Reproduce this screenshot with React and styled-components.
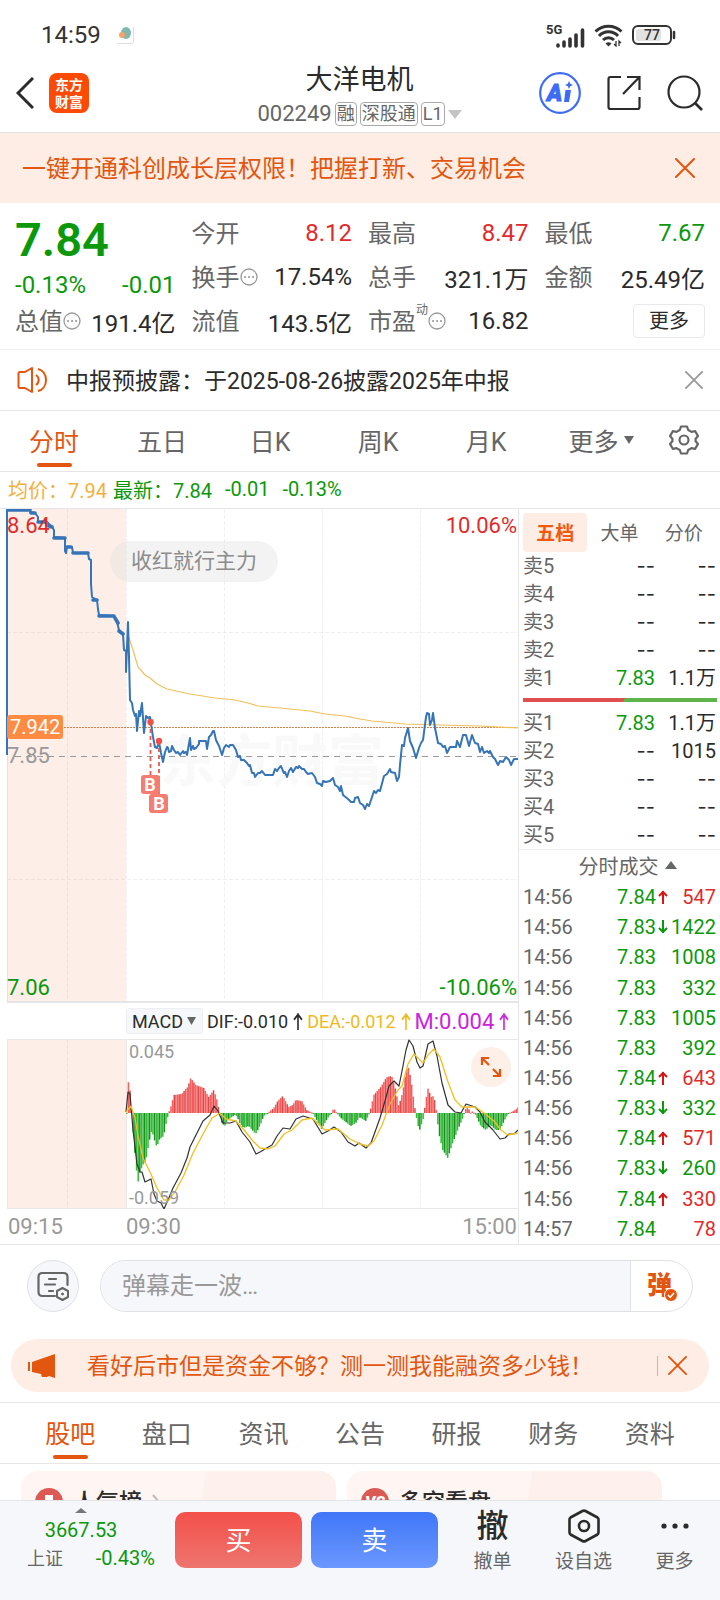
import React, { useState } from 'react';
import styled, { createGlobalStyle, css } from 'styled-components';

const colors = {
  up: '#df2b2b',
  down: '#0b980b',
  brand: '#e2560f',
  brandSoft: '#fdede4',
  ink: '#2b2b2b',
  text: '#666',
  muted: '#999',
  line: '#e6e6e8',
  panel: '#f6f7fa',
};

const GlobalStyle = createGlobalStyle`
  *, *::before, *::after {
    box-sizing: border-box;
  }

  body {
    margin: 0;
    background: #fff;
    color: ${colors.ink};
    font-family: Roboto, 'Noto Sans CJK SC', sans-serif;
    font-size: 24px;
  }

  button, input, select {
    margin: 0;
    padding: 0;
    border: 0;
    background: none;
    color: inherit;
    font: inherit;
  }

  svg {
    display: block;
    flex: none;
  }
`;

const Page = styled.main`
  width: 100%;
  overflow: hidden;
`;

/* status bar and header */

const StatusBar = styled.div`
  display: flex;
  align-items: center;
  height: 62px;
  padding: 8px 44px 0 41px;
  color: #333;
  font-size: 24px;
`;

const StatusIcons = styled.div`
  display: flex;
  align-items: center;
  gap: 8px;
  margin-left: auto;
`;

const AppDot = styled.svg`
  margin-left: 14px;
`;

const Header = styled.header`
  display: grid;
  grid-template-columns: 1fr auto 1fr;
  align-items: center;
  height: 71px;
  padding: 0 17px 8px 16px;
  border-bottom: 1px solid ${colors.line};
`;

const HeaderSide = styled.div`
  display: flex;
  align-items: center;
  gap: ${({ gap }) => gap}px;
  justify-content: ${({ end }) => (end ? 'flex-end' : 'flex-start')};
`;

const IconButton = styled.button`
  display: flex;
  align-items: center;
  justify-content: center;
  flex: none;
`;

const Logo = styled.a`
  display: grid;
  place-content: center;
  width: 40px;
  height: 40px;
  border-radius: 8px;
  background: #fe4a05;
  color: #fff;
  font-family: 'Noto Sans CJK SC', sans-serif;
  font-size: 14px;
  font-weight: 700;
  line-height: 17px;
  text-align: center;
  text-decoration: none;
`;

const StockTitle = styled.h1`
  margin: 0;
  font-size: 27px;
  font-weight: 400;
  line-height: 36px;
  text-align: center;
`;

const StockMeta = styled.div`
  display: flex;
  align-items: center;
  gap: 3px;
  height: 26px;
  margin: 3px 0 -3px;
  color: ${colors.text};
  font-size: 22px;
  line-height: 26px;
`;

const Tag = styled.span`
  height: 24px;
  padding: 0 1px;
  border: 1px solid #aaa;
  border-radius: 4px;
  font-size: 18px;
  line-height: 21px;
`;

/* banners */

const Promo = styled.div`
  display: flex;
  align-items: center;
  justify-content: space-between;
  height: 70px;
  padding: 0 25px 0 22px;
  background: ${colors.brandSoft};
  color: ${colors.brand};

  span {
    padding-bottom: 4px;
  }
`;

const Notice = styled.div`
  display: flex;
  align-items: center;
  height: 61px;
  padding: 0 17px;
  border-bottom: 1px solid ${colors.line};
  font-size: 23px;

  span {
    flex: 1;
    margin-left: 18px;
    padding-bottom: 3px;
  }
`;

/* quote */

const Quote = styled.section`
  display: grid;
  grid-template-columns: repeat(4, 1fr);
  grid-template-rows: repeat(3, 44px);
  column-gap: 16px;
  padding: 8px 15px 6px;
  border-bottom: 1px solid #f0f0f2;
`;

const Cell = styled.div`
  display: flex;
  align-items: center;
  color: ${({ tone }) => colors[tone] || colors.ink};
  white-space: nowrap;

  b {
    margin-left: auto;
    font-weight: 400;
  }
`;

const Label = styled.span`
  padding-bottom: 4px;
  color: ${colors.text};
`;

const Sup = styled.sup`
  align-self: flex-start;
  color: ${colors.text};
  font-size: 12px;
  line-height: 22px;
`;

const PriceBlock = styled.div`
  display: flex;
  flex-direction: column;
  justify-content: space-between;
  grid-row: span 2;
  color: ${colors.down};

  strong {
    font-size: 47px;
    font-weight: 600;
    line-height: 58px;
  }

  div {
    display: flex;
    justify-content: space-between;
    line-height: 28px;
  }
`;

const MoreButton = styled.button`
  width: 72px;
  height: 34px;
  margin-left: auto;
  padding-bottom: 3px;
  border: 1px solid #e9e9eb;
  border-radius: 4px;
  font-size: 20px;
`;

/* tabs */

const Tab = styled.button`
  position: relative;
  display: flex;
  align-items: center;
  justify-content: center;
  gap: 5px;
  padding-bottom: 3px;
  color: ${({ active }) => (active ? colors.brand : colors.text)};
  font-size: 25px;

  &::after {
    content: '';
    position: absolute;
    bottom: 4px;
    width: 35px;
    height: 4px;
    border-radius: 2px;
    background: ${({ active }) => (active ? colors.brand : 'transparent')};
  }
`;

const Tabs = styled.div`
  display: grid;
  height: 61px;
  border-bottom: 1px solid ${colors.line};
  ${({ kind }) =>
    kind === 'period'
      ? css`
          grid-template-columns: repeat(6, 3fr) 2fr;

          ${Tab}:nth-last-child(2) {
            padding-left: 14px;
          }
        `
      : css`
          grid-template-columns: repeat(7, 1fr);
          padding: 0 22px;
        `}
`;

const Averages = styled.div`
  display: flex;
  align-items: center;
  gap: 13px;
  height: 37px;
  padding: 0 8px 2px;
  border-bottom: 1px solid ${colors.line};
  color: ${colors.down};
  font-size: 20px;
  white-space: nowrap;

  span:first-child {
    margin-right: -7px;
    color: #f2b13c;
  }
`;

/* chart column */

const Market = styled.section`
  display: grid;
  grid-template-columns: minmax(0, 1fr) 202px;
  border-bottom: 1px solid ${colors.line};
`;

const Plot = styled.div`
  position: relative;

  svg.plot {
    width: 100%;
    height: ${({ height }) => height}px;
  }
`;

const PlotLabel = styled.span`
  position: absolute;
  top: ${({ top }) => top}px;
  ${({ right, left }) => (right ? `right: ${right}px` : `left: ${left}px`)};
  color: ${({ tone }) => colors[tone]};
  font-size: ${({ small }) => (small ? 18 : 22)}px;
  line-height: 24px;
`;

const AvgTag = styled(PlotLabel)`
  padding: 0 3px;
  border-radius: 3px;
  background: #ff8c42;
  color: #fff;
  font-size: 20px;
`;

const Danmu = styled.span`
  position: absolute;
  top: 32px;
  left: 110px;
  padding: 0 21px;
  border-radius: 21px;
  background: rgba(225, 225, 225, 0.4);
  color: #8c8c8c;
  font-size: 21px;
  line-height: 41px;
`;

const Expand = styled(IconButton)`
  position: absolute;
  top: 8px;
  right: 7px;
  width: 40px;
  height: 40px;
  border-radius: 50%;
  background: #fdf0e9;
`;

const Indicator = styled.div`
  display: flex;
  align-items: center;
  gap: 4px;
  height: 36px;
  padding-left: 126px;
  white-space: nowrap;
`;

const SelectBox = styled.label`
  display: flex;
  align-items: center;
  justify-content: space-between;
  width: 77px;
  height: 26px;
  padding: 0 6px 0 5px;
  border: 1px solid #eeeff2;
  border-radius: 3px;
  background: ${colors.panel};

  select {
    width: 54px;
    appearance: none;
    font-size: 18px;
  }
`;

const Reading = styled.span`
  display: flex;
  align-items: center;
  gap: 5px;
  color: ${({ color }) => color};
  font-size: ${({ wide }) => (wide ? 22 : 18)}px;
`;

const Times = styled.div`
  display: grid;
  grid-template-columns: 118px 1fr auto;
  align-items: center;
  height: 35px;
  padding: 0 1px 0 8px;
  color: ${colors.muted};
  font-size: 22px;
`;

/* order book */

const Book = styled.aside`
  display: flex;
  flex-direction: column;
  border-left: 1px solid ${colors.line};
  font-size: 20px;
`;

const BookTabs = styled.div`
  display: grid;
  grid-template-columns: repeat(3, 1fr);
  height: 39px;
  margin: 4px 4px 0;
`;

const BookTab = styled.button`
  padding-bottom: 3px;
  border-radius: 4px;
  background: ${({ active }) => (active ? '#feede5' : 'none')};
  color: ${({ active }) => (active ? '#f2590c' : colors.text)};
  font-size: 19px;
  font-weight: ${({ active }) => (active ? 700 : 400)};
`;

const BookTable = styled.table`
  width: 100%;
  border-collapse: collapse;
  table-layout: fixed;
  color: ${colors.ink};

  th,
  td {
    height: 28px;
    padding: 0 4px;
    font-weight: 400;
    line-height: 28px;
    text-align: right;
    white-space: nowrap;
  }

  th {
    width: 34%;
    color: ${colors.text};
    text-align: left;
  }

  td:last-child {
    width: 61px;
  }
`;

const Price = styled.td`
  color: ${({ $empty }) => ($empty ? colors.ink : colors.down)};
`;

const Dashes = styled.span`
  font-family: Inter, sans-serif;
`;

const Balance = styled.div`
  height: 4px;
  margin: 6px 3px 7px 4px;
  background: linear-gradient(120deg, #e04f4f 52%, #5fb54a 52%);
`;

const TradesTitle = styled.button`
  display: flex;
  align-items: center;
  justify-content: center;
  gap: 6px;
  height: 33px;
  padding: 0 0 2px 16px;
  border-top: 1px solid #f0f0f2;
  color: ${colors.text};
  font-size: 20px;
`;

const Trades = styled.div`
  flex: 1;
  display: grid;
`;

const TradeTable = styled.table`
  width: 100%;
  border-collapse: collapse;

  td {
    padding: 0;
    line-height: 28px;
  }

  td:first-child {
    width: 98px;
    padding-left: 4px;
    color: ${colors.text};
  }

  td:last-child {
    padding-right: 4px;
    text-align: right;
  }
`;

const TradePrice = styled.span`
  display: flex;
  align-items: center;
  gap: 2px;
  color: ${colors.down};
`;

const Volume = styled.td`
  color: ${({ $up }) => ($up ? colors.up : colors.down)};
`;

/* comment row */

const Comment = styled.form`
  display: flex;
  gap: 21px;
  padding: 15px 27px 27px;
`;

const RoundButton = styled(IconButton)`
  width: 52px;
  height: 52px;
  border: 1px solid #dfe1e5;
  border-radius: 50%;
  background: ${colors.panel};
`;

const Field = styled.div`
  display: flex;
  flex: 1;
  height: 52px;
  border: 1px solid #dfe1e5;
  border-radius: 26px;
  overflow: hidden;

  input {
    flex: 1;
    min-width: 0;
    padding: 0 21px;
    background: ${colors.panel};
  }

  input::placeholder {
    color: ${colors.muted};
  }
`;

const DanmuToggle = styled.button`
  position: relative;
  width: 62px;
  padding-right: 4px;
  border-left: 1px solid #dfe1e5;
  color: ${colors.brand};
  font-size: 25px;
  font-weight: 900;
  line-height: 46px;

  svg {
    position: absolute;
    right: 14px;
    bottom: 9px;
  }
`;

const Margin = styled.div`
  display: flex;
  align-items: center;
  height: 53px;
  margin: 0 11px 10px;
  padding: 0 22px 0 16px;
  border-radius: 27px;
  background: ${colors.brandSoft};
  color: ${colors.brand};
  font-size: 23px;
  white-space: nowrap;

  span {
    flex: 1;
    margin-left: 32px;
    padding-bottom: 3px;
  }

  button {
    height: 20px;
    padding-left: 10px;
    border-left: 1px solid #ecaa88;
  }
`;

const Divider = styled.div`
  border-top: 1px solid ${colors.line};
`;

/* cards and bottom bar */

const Cards = styled.div`
  display: grid;
  grid-template-columns: 1fr 1fr;
  gap: 11px;
  height: 36px;
  padding: 7px 58px 0 21px;
  overflow: hidden;
`;

const Card = styled.a`
  display: flex;
  align-items: center;
  gap: 10px;
  height: 76px;
  padding: 0 14px 14px;
  border-radius: 16px;
  background: linear-gradient(100deg, #fff6f3 56%, #fdf0ed 57%);
  color: ${colors.ink};
  font-size: 23px;
  font-weight: 500;
  text-decoration: none;

  span {
    padding-bottom: 5px;
  }
`;

const BottomBar = styled.nav`
  display: grid;
  grid-template-columns: 166px 127px 127px minmax(0, 1fr);
  column-gap: 9px;
  height: 100px;
  border-top: 1px solid #e3e4e7;
  background: ${colors.panel};
`;

const Index = styled.button`
  display: grid;
  grid-template-columns: auto auto;
  grid-template-rows: 12px 28px 28px;
  align-content: start;
  align-items: center;
  justify-content: space-between;
  padding: 3px 11px 0 27px;
  color: ${colors.down};
  font-size: 20px;

  svg,
  strong {
    grid-column: span 2;
    justify-self: center;
    margin-right: 20px;
    font-weight: 400;
  }

  span {
    padding-bottom: 3px;
    color: ${colors.text};
    font-size: 18px;
  }
`;

const TradeButton = styled.button`
  height: 56px;
  margin-top: 11px;
  padding-bottom: 4px;
  border-radius: 10px;
  background: ${({ $buy }) =>
    $buy
      ? 'linear-gradient(#f4504a, #ee756f)'
      : 'linear-gradient(#3f77f7, #6c98ff)'};
  color: #fff;
  font-size: 26px;
`;

const Actions = styled.div`
  display: grid;
  grid-template-columns: repeat(3, 1fr);
`;

const Action = styled.button`
  display: grid;
  grid-template-rows: 36px 26px;
  align-content: start;
  place-items: center;
  row-gap: 2px;
  padding-top: 7px;
  color: ${colors.text};
  font-size: 19px;

  b {
    color: ${colors.ink};
    font-size: 32px;
    font-weight: 500;
    line-height: 34px;
  }
`;

/* icons */

const Close = ({ color, size = 20 }) => (
  <svg width={size} height={size} viewBox="0 0 20 20" stroke={color} strokeWidth="2" strokeLinecap="round">
    <path d="M1 1 19 19M19 1 1 19" />
  </svg>
);

const Triangle = ({ width, height, up, color = '#666' }) => (
  <svg width={width} height={height} viewBox="0 0 10 10" preserveAspectRatio="none" fill={color}>
    <path d={up ? 'M0 10 5 0l5 10z' : 'M0 0h10L5 10z'} />
  </svg>
);

const Arrow = ({ down, color = 'currentColor', height = 14, stroke = 2 }) => (
  <svg width="10" height={height} viewBox="0 0 10 14" preserveAspectRatio="none" fill="none" stroke={color} strokeWidth={stroke}>
    <path d={down ? 'M5 0v13M1 8l4 4 4-4' : 'M5 14V1M1 6l4-4 4 4'} />
  </svg>
);

const InfoDot = () => (
  <svg width="18" height="18" viewBox="0 0 18 18" fill="none" stroke="#999">
    <circle cx="9" cy="9" r="8" strokeWidth="1.3" />
    <path d="M5 9h.1M9 9h.1M13 9h.1" strokeWidth="2" strokeLinecap="round" />
  </svg>
);

const Signal = () => (
  <svg width="40" height="26" viewBox="0 0 40 26">
    <text x="0" y="12" fontSize="13" fontWeight="700" fill="#333">5G</text>
    <path d="M12 24v-1M18 24v-4M24 24v-7M30 24V13M36.500 24V8" stroke="#333" strokeWidth="3.600" strokeLinecap="round" />
  </svg>
);

const Wifi = () => (
  <svg width="30" height="24" viewBox="0 0 30 24" fill="none" stroke="#333" strokeWidth="3">
    <path d="M1.500 8.500a18.500 18.500 0 0 1 26 0M5 13a13 13 0 0 1 19 0M9 17a8 8 0 0 1 11 0" />
    <path d="M11.500 20.500a4.500 4.500 0 0 1 6 0l-3 3z" fill="#333" stroke="none" />
    <path d="M22 18v5l-2-2M25 23v-5l2 2" strokeWidth="1.300" />
  </svg>
);

const Battery = () => (
  <svg width="44" height="20" viewBox="0 0 44 20">
    <rect x="1" y="1" width="38" height="18" rx="5" fill="#fff" stroke="#333" strokeWidth="2" />
    <rect x="4" y="4" width="25" height="12" rx="2" fill="#e2e2e2" />
    <path d="M42 7v6" stroke="#333" strokeWidth="2.500" strokeLinecap="round" />
    <text x="20" y="15" fontSize="14" fontWeight="500" fill="#333" textAnchor="middle">77</text>
  </svg>
);

const AiIcon = () => (
  <svg width="42" height="42" viewBox="0 0 42 42">
    <circle cx="21" cy="21" r="19.800" fill="#fff" stroke="#3d6bf5" strokeWidth="2.200" />
    <text x="8" y="29" fontSize="23" fontWeight="900" fontStyle="italic" fill="#3d6bf5" stroke="#3d6bf5">A</text>
    <path d="m26.500 18h5.500l-2 12h-5z" fill="#3d6bf5" />
    <path d="m30 9 1.200 2.800L34 13l-2.800 1.200L30 17l-1.200-2.800L26 13l2.800-1.200z" fill="#3d6bf5" />
  </svg>
);

const ShareIcon = () => (
  <svg width="34" height="36" viewBox="0 0 34 36" fill="none" stroke="#2b2b2b" strokeWidth="2.200">
    <path d="M14 2H3.500Q1.500 2 1.500 4v28q0 2 2 2h27q2 0 2-2V22M16 19 32 2.500M20 2h12.500v13" />
  </svg>
);

const SearchIcon = () => (
  <svg width="36" height="36" viewBox="0 0 36 36" fill="none" stroke="#2b2b2b" strokeWidth="2.200">
    <circle cx="17" cy="17" r="15.500" />
    <path d="m28 28 7 7" strokeWidth="2.600" />
  </svg>
);

const Speaker = () => (
  <svg width="31" height="26" viewBox="0 0 31 26" fill="none" stroke={colors.brand} strokeWidth="2">
    <path d="M1.500 6.500q0-1.500 1.500-1.500h5l7-4v24l-7-4H3q-1.500 0-1.500-1.500zM19 8a6 6 0 0 1 0 10M21 2c4.500 1 8 5 8 11s-3.500 10-8 11" strokeLinejoin="round" />
  </svg>
);

const Gear = () => (
  <svg width="30" height="30" viewBox="0 0 30 30" fill="none" stroke="#666" strokeWidth="2.200" strokeLinejoin="round">
    <path d="M12 1.500h6l1.200 3.500 3.300 1.900 3.700-.7 2.800 4.900-2.400 2.700v2.400l2.400 2.700-2.800 4.900-3.700-.7-3.300 1.900-1.200 3.500h-6l-1.200-3.500-3.300-1.900-3.700.7L1 18.900l2.400-2.700v-2.400L1 11.100l2.800-4.900 3.700.7L10.800 5z" />
    <circle cx="15" cy="15" r="4.500" />
  </svg>
);

const ExpandIcon = () => (
  <svg width="22" height="22" viewBox="0 0 22 22" fill="none" stroke={colors.brand} strokeWidth="2.200">
    <path d="M9 2H2v7M2 2l7 7M13 20h7v-7M20 20l-7-7" />
  </svg>
);

const NoteIcon = () => (
  <svg width="32" height="30" viewBox="0 0 32 30" fill="none" stroke="#666" strokeWidth="2.200" strokeLinecap="round">
    <path d="M18 25H5.500q-4 0-4-4V6q0-4 4-4h21q4 0 4 4v8M12 8h7M8 13.500h10M12 20h4" />
    <path d="m25.500 17 5.500 3v6l-5.500 3-5.500-3v-6z" strokeWidth="2" strokeLinejoin="round" />
    <circle cx="25.500" cy="23" r="1" fill="#666" strokeWidth="1" />
  </svg>
);

const Megaphone = () => (
  <svg width="28" height="24" viewBox="0 0 28 24" fill={colors.brand}>
    <path d="M1 8h2v9H1zM5 8l23-8v24l-6-2-2 1h-5l-1-3-9-2z" />
  </svg>
);

const CheckDot = () => (
  <svg width="14" height="14" viewBox="0 0 14 14" fill="none">
    <circle cx="7" cy="7" r="6.500" fill={colors.brand} stroke="#fff" />
    <path d="m4 7 2.200 2.300L10 5" stroke="#fff" strokeWidth="1.500" />
  </svg>
);

const Hexagon = () => (
  <svg width="32" height="34" viewBox="0 0 32 34" fill="none" stroke="#2b2b2b" strokeWidth="2.600" strokeLinejoin="round">
    <path d="M14.500 2q1.500-.8 3 0l12 6.500q1 .6 1 2v13q0 1.400-1 2l-12 6.500q-1.500.8-3 0l-12-6.500q-1-.6-1-2v-13q0-1.400 1-2z" />
    <circle cx="16" cy="17" r="5" />
  </svg>
);

/* chart data */

const priceLine =
  '7,755 7,510 30,510 30,512 35,513 38,517 38,522 47,522 52,527 54,530 54,537 65,538 65,551 66,553 67,547 72,547 73,553 88,553 89,559 91,560 91,584 92,597 97,600 98,609 99,615 114,616 117,622 119,630 123,634 124,650 126,651 126,672 128,622 129,657 130,700 132,703 133,710 135,716 136,714 137,731 139,711 140,716 142,703 144,733 146,716 148,718 150,717 153,737 155,747 157,748 159,742 161,753 163,762 165,752 167,747 168,748 169,752 171,751 172,746 174,750 176,753 178,752 180,755 183,751 184,753 186,752 187,755 190,738 191,750 193,746 194,749 196,748 199,744 199,741 206,741 207,749 209,737 211,735 213,731 214,731 216,740 219,746 222,755 224,748 226,745 229,747 230,745 233,745 236,750 238,757 240,756 241,760 244,760 247,763 249,766 250,765 252,773 254,773 255,777 258,773 260,773 262,771 265,775 273,775 275,769 277,771 279,768 281,766 283,771 284,773 285,772 287,777 289,771 291,768 293,772 296,767 298,768 299,766 302,769 304,769 306,772 308,774 312,773 315,777 317,783 320,784 322,786 323,781 326,782 330,781 333,778 335,785 338,787 340,791 341,786 343,795 348,799 351,802 354,802 355,798 358,797 360,803 363,805 365,809 367,804 369,806 371,800 374,791 376,793 378,790 380,791 384,776 387,774 390,769 391,772 395,773 397,781 399,777 400,765 402,745 404,746 405,738 408,728 410,741 413,748 416,758 419,748 421,743 423,740 426,717 427,713 429,714 430,725 432,720 433,713 435,728 438,743 441,744 443,747 445,746 447,753 450,747 456,747 457,741 460,747 463,735 466,735 469,746 472,735 475,743 478,744 480,752 482,747 484,753 487,751 489,753 490,751 493,757 495,759 498,765 500,761 503,762 506,757 509,760 511,765 514,759 519,759';

const averageLine =
  '128,635 133,650 138,667 145,675 150,678 157,684 167,689 190,694 215,698 235,700 248,703 258,706 280,708 310,711 325,714 345,716 360,719 372,721 405,724 440,725 480,726 519,728';

const difLine =
  '126,1112 128,1092 130,1094 133,1130 137,1164 140,1172 142,1172 145,1182 151,1179 154,1194 157,1201 161,1203 164,1209 168,1200 173,1188 181,1173 187,1158 190,1147 197,1133 203,1121 210,1115 214,1106 218,1111 223,1123 230,1123 236,1121 242,1132 250,1142 256,1154 260,1152 265,1149 272,1145 277,1136 283,1128 290,1129 296,1119 303,1116 313,1119 322,1134 328,1131 334,1127 341,1132 348,1142 355,1146 359,1143 366,1148 371,1143 375,1132 380,1118 385,1101 389,1086 394,1081 399,1086 402,1071 406,1050 409,1040 413,1046 417,1062 420,1068 423,1066 428,1044 433,1041 437,1056 442,1083 448,1105 455,1112 461,1113 466,1104 475,1107 480,1112 485,1122 493,1130 500,1139 505,1138 509,1134 514,1134 518,1130';

const deaLine =
  '126,1112 131,1106 135,1118 138,1136 143,1158 151,1174 157,1188 164,1200 169,1200 176,1190 184,1175 193,1153 203,1134 212,1118 220,1113 226,1119 236,1121 245,1131 252,1140 260,1148 268,1149 275,1146 284,1134 292,1130 302,1120 312,1118 325,1130 338,1129 350,1139 360,1144 368,1146 374,1141 382,1125 390,1104 398,1090 402,1086 408,1064 414,1054 423,1063 428,1055 434,1049 440,1057 448,1082 455,1100 462,1107 475,1107 484,1113 494,1121 501,1130 508,1135 518,1133';

const ZERO = 1113;

// [x, height above the zero line]
const histogram = [
  [126, 0], [127, 33], [129, 26], [131, 0], [132, -9], [133, -28], [135, -48], [137, -71], [139, -60], [142, -52],
  [145, -48], [148, -31], [151, -17], [154, -28], [156, -34], [159, -26], [163, -23], [165, -12], [168, 0],
  [171, 9], [173, 18], [181, 19], [184, 23], [187, 26], [190, 35], [195, 28], [203, 25], [208, 16], [213, 23],
  [216, 14], [219, 0], [221, -10], [224, -13], [227, -7], [234, -2], [236, -3], [239, -10], [243, -15], [248, -13],
  [255, -21], [260, -11], [263, -3], [267, 0], [273, 5], [277, 12], [282, 17], [288, 6], [292, 8], [295, 13],
  [301, 12], [306, 3], [312, 0], [316, -7], [321, -16], [327, -5], [331, 0], [333, 5], [336, 0], [340, -5],
  [350, -13], [355, -10], [359, -4], [365, -8], [369, 0], [373, 18], [380, 26], [386, 36], [391, 37], [395, 23],
  [398, 7], [402, 21], [405, 40], [407, 48], [410, 35], [414, 6], [415, 0], [417, -12], [419, -17], [423, -4],
  [424, 5], [427, 25], [431, 15], [433, 18], [435, 6], [436, 0], [438, -20], [442, -37], [447, -45], [452, -30],
  [457, -17], [462, -5], [465, 4], [467, 6], [470, 0], [472, 2], [475, -2], [480, -13], [485, -17], [490, -12],
  [495, -17], [499, -17], [505, -5], [508, 0], [513, 2], [519, 7],
];

const valueAt = x => {
  const i = Math.max(1, histogram.findIndex(([px]) => px >= x));
  const [x0, v0] = histogram[i - 1];
  const [x1, v1] = histogram[i];
  return v0 + ((v1 - v0) * (x - x0)) / (x1 - x0);
};

const bars = Array.from({ length: 240 }, (_, i) => {
  const x = 126 + (i * 393) / 240;
  return { x, value: valueAt(x), dark: i % 3 === 2 };
});

const barColor = ({ value, dark }) => {
  if (value > 0) return dark ? '#d94a4a' : '#fb5b5b';
  return dark ? '#1d8f22' : '#33bb39';
};

const GRID_X = [67, 224, 322, 420];

const PriceChart = () => (
  <svg className="plot" viewBox="0 509 518 494" preserveAspectRatio="none" fill="none">
    <rect x="7" y="509" width="119" height="494" fill="#fdeee7" />
    <g stroke="rgba(60, 40, 40, 0.07)" strokeDasharray="4 2">
      {GRID_X.map(x => (
        <path key={x} d={`M${x}.5 509v494`} />
      ))}
      <path d="M126.500 509v494M7 632.500h511M7 879.500h511" />
    </g>
    <path d="M7.500 509v494" stroke="#eadfda" />
    <path d="M7 1002h511" stroke="#e6e6e8" strokeWidth="2" />
    <text x="160" y="781" fontSize="56" fontWeight="700" fill="#f9f9f9">东方财富</text>
    <path d="M7 727.500h511" stroke="#d9814d" strokeDasharray="2 1" />
    <path d="M15 756.500h503" stroke="#999" strokeDasharray="6 5" />
    <polyline points={averageLine} stroke="#efc05a" strokeWidth="1.200" />
    <polyline points={priceLine} stroke="#3674b8" strokeWidth="2" strokeLinejoin="round" />
    <path d="M8 510h22M31 513h4M38 522h8M47 525l5 2M54 538h11M67 547h4M73 553h15M93 600h4M99 616h15M115 618l3 5M119 631l4 3" stroke="#3674b8" strokeWidth="3.600" strokeLinecap="round" />
    <g stroke="#ee5a4f" strokeWidth="1.800" strokeDasharray="4 3">
      <path d="M150.500 722v53M159 741v53" />
    </g>
    <g fill="#ee5148">
      <circle cx="150.500" cy="722" r="3.200" />
      <circle cx="159" cy="741" r="3.200" />
    </g>
    <rect x="141" y="775" width="19" height="19" rx="3" fill="#f67c70" />
    <rect x="149" y="794" width="19" height="19" rx="3" fill="#f67c70" />
    <g fill="#fff" fontSize="18" fontWeight="700" textAnchor="middle">
      <text x="150" y="791">B</text>
      <text x="159" y="810">B</text>
    </g>
  </svg>
);

const MacdChart = () => (
  <svg className="plot" viewBox="0 1039 518 170" preserveAspectRatio="none" fill="none">
    <rect x="7" y="1039" width="119" height="170" fill="#fdeee7" />
    <g stroke="rgba(60, 40, 40, 0.07)" strokeDasharray="4 2">
      {GRID_X.map(x => (
        <path key={x} d={`M${x}.5 1039v170`} />
      ))}
    </g>
    <path d="M7 1039.500h511M7 1208.500h511M7.500 1039v170M126.500 1039v170" stroke="#e9e6e6" />
    {bars.map(bar => (
      <rect
        key={bar.x}
        x={bar.x}
        y={bar.value > 0 ? ZERO - bar.value : ZERO}
        width="1.500"
        height={Math.max(1, Math.abs(bar.value))}
        fill={barColor(bar)}
      />
    ))}
    <polyline points={difLine} stroke="#333" strokeWidth="1.200" strokeLinejoin="round" />
    <polyline points={deaLine} stroke="#f0c020" strokeWidth="1.300" strokeLinejoin="round" />
  </svg>
);

/* content */

const periods = ['分时', '五日', '日K', '周K', '月K'];
const sections = ['股吧', '盘口', '资讯', '公告', '研报', '财务', '资料'];
const bookTabs = ['五档', '大单', '分价'];

const asks = [
  ['卖5', '--', '--'],
  ['卖4', '--', '--'],
  ['卖3', '--', '--'],
  ['卖2', '--', '--'],
  ['卖1', '7.83', '1.1万'],
];

const bids = [
  ['买1', '7.83', '1.1万'],
  ['买2', '--', '1015'],
  ['买3', '--', '--'],
  ['买4', '--', '--'],
  ['买5', '--', '--'],
];

const trades = [
  ['14:56', '7.84', 'up', '547', true],
  ['14:56', '7.83', 'down', '1422'],
  ['14:56', '7.83', '', '1008'],
  ['14:56', '7.83', '', '332'],
  ['14:56', '7.83', '', '1005'],
  ['14:56', '7.83', '', '392'],
  ['14:56', '7.84', 'up', '643', true],
  ['14:56', '7.83', 'down', '332'],
  ['14:56', '7.84', 'up', '571', true],
  ['14:56', '7.83', 'down', '260'],
  ['14:56', '7.84', 'up', '330', true],
  ['14:57', '7.84', '', '78', true],
];

const Amount = ({ value }) => (value === '--' ? <Dashes>--</Dashes> : value);

const Levels = ({ rows }) => (
  <BookTable>
    <tbody>
      {rows.map(([name, price, amount]) => (
        <tr key={name}>
          <th scope="row">{name}</th>
          <Price $empty={price === '--'}>
            <Amount value={price} />
          </Price>
          <td>
            <Amount value={amount} />
          </td>
        </tr>
      ))}
    </tbody>
  </BookTable>
);

const Stat = ({ label, value, tone, info, sup }) => (
  <Cell tone={tone}>
    <Label>{label}</Label>
    {sup && <Sup>{sup}</Sup>}
    {info && <InfoDot />}
    <b>{value}</b>
  </Cell>
);

const App = () => {
  const [period, setPeriod] = useState('分时');
  const [section, setSection] = useState('股吧');
  const [bookTab, setBookTab] = useState('五档');

  return (
    <Page>
      <GlobalStyle />

      <StatusBar>
        14:59
        <AppDot width="20" height="20" viewBox="0 0 20 20">
          <path d="M2 18.500h14q2.500 0 2.500-2.500V2" fill="none" stroke="#dedede" />
          <ellipse cx="11" cy="8" rx="5" ry="6" fill="#7fb9ae" />
          <circle cx="7" cy="10" r="3" fill="#f3a469" />
        </AppDot>
        <StatusIcons>
          <Signal />
          <Wifi />
          <Battery />
        </StatusIcons>
      </StatusBar>

      <Header>
        <HeaderSide gap={15}>
          <IconButton aria-label="返回">
            <svg width="18" height="32" viewBox="0 0 18 32" fill="none" stroke="#2b2b2b" strokeWidth="3">
              <path d="M17 1 2 16l15 15" />
            </svg>
          </IconButton>
          <Logo href="#home">
            东方
            <br />
            财富
          </Logo>
        </HeaderSide>
        <div>
          <StockTitle>大洋电机</StockTitle>
          <StockMeta>
            002249
            <Tag>融</Tag>
            <Tag>深股通</Tag>
            <Tag>L1</Tag>
            <IconButton aria-label="切换股票">
              <Triangle width={14} height={9} color="#c4c4c4" />
            </IconButton>
          </StockMeta>
        </div>
        <HeaderSide gap={26} end={1}>
          <IconButton aria-label="AI">
            <AiIcon />
          </IconButton>
          <IconButton aria-label="分享">
            <ShareIcon />
          </IconButton>
          <IconButton aria-label="搜索">
            <SearchIcon />
          </IconButton>
        </HeaderSide>
      </Header>

      <Promo>
        <span>一键开通科创成长层权限！把握打新、交易机会</span>
        <IconButton aria-label="关闭">
          <Close color={colors.brand} />
        </IconButton>
      </Promo>

      <Quote>
        <PriceBlock>
          <strong>7.84</strong>
          <div>
            <span>-0.13%</span>
            <span>-0.01</span>
          </div>
        </PriceBlock>
        <Stat label="今开" value="8.12" tone="up" />
        <Stat label="最高" value="8.47" tone="up" />
        <Stat label="最低" value="7.67" tone="down" />
        <Stat label="换手" value="17.54%" info />
        <Stat label="总手" value="321.1万" />
        <Stat label="金额" value="25.49亿" />
        <Stat label="总值" value="191.4亿" info />
        <Stat label="流值" value="143.5亿" />
        <Stat label="市盈" value="16.82" sup="动" info />
        <Cell>
          <MoreButton>更多</MoreButton>
        </Cell>
      </Quote>

      <Notice>
        <Speaker />
        <span>中报预披露：于2025-08-26披露2025年中报</span>
        <IconButton aria-label="关闭">
          <Close color="#999" size={18} />
        </IconButton>
      </Notice>

      <Tabs kind="period">
        {periods.map(name => (
          <Tab key={name} active={name === period ? 1 : undefined} onClick={() => setPeriod(name)}>
            {name}
          </Tab>
        ))}
        <Tab>
          更多
          <Triangle width={10} height={8} />
        </Tab>
        <Tab aria-label="设置">
          <Gear />
        </Tab>
      </Tabs>

      <Averages>
        <span>均价：7.94</span>
        <span>最新：7.84</span>
        <span>-0.01</span>
        <span>-0.13%</span>
      </Averages>

      <Market>
        <div>
          <Plot height={494}>
            <PriceChart />
            <PlotLabel top={5} left={7} tone="up">8.64</PlotLabel>
            <PlotLabel top={5} right={1} tone="up">10.06%</PlotLabel>
            <AvgTag top={206} left={7}>7.942</AvgTag>
            <PlotLabel top={235} left={7} tone="muted">7.85</PlotLabel>
            <PlotLabel top={467} left={7} tone="down">7.06</PlotLabel>
            <PlotLabel top={467} right={1} tone="down">-10.06%</PlotLabel>
            <Danmu>收红就行主力</Danmu>
          </Plot>
          <Indicator>
            <SelectBox>
              <select aria-label="指标" defaultValue="MACD">
                <option>MACD</option>
                <option>KDJ</option>
              </select>
              <Triangle width={9} height={8} />
            </SelectBox>
            <Reading color={colors.ink}>
              DIF:-0.010
              <Arrow height={18} stroke={1.6} />
            </Reading>
            <Reading color="#efb91c">
              DEA:-0.012
              <Arrow height={18} stroke={1.6} />
            </Reading>
            <Reading color="#cc22dd" wide={1}>
              M:0.004
              <Arrow height={18} stroke={1.6} />
            </Reading>
          </Indicator>
          <Plot height={170}>
            <MacdChart />
            <PlotLabel top={1} left={129} tone="muted" small={1}>0.045</PlotLabel>
            <PlotLabel top={147} left={129} tone="muted" small={1}>-0.059</PlotLabel>
            <Expand aria-label="全屏">
              <ExpandIcon />
            </Expand>
          </Plot>
          <Times>
            <span>09:15</span>
            <span>09:30</span>
            <span>15:00</span>
          </Times>
        </div>

        <Book>
          <BookTabs>
            {bookTabs.map(name => (
              <BookTab key={name} active={name === bookTab ? 1 : undefined} onClick={() => setBookTab(name)}>
                {name}
              </BookTab>
            ))}
          </BookTabs>
          <Levels rows={asks} />
          <Balance />
          <Levels rows={bids} />
          <TradesTitle>
            分时成交
            <Triangle width={12} height={8} up />
          </TradesTitle>
          <Trades>
            <TradeTable>
              <tbody>
                {trades.map(([time, price, move, volume, up], i) => (
                  <tr key={i}>
                    <td>{time}</td>
                    <td>
                      <TradePrice>
                        {price}
                        {move && <Arrow down={move === 'down'} color={move === 'up' ? '#d81414' : colors.down} />}
                      </TradePrice>
                    </td>
                    <Volume $up={up}>{volume}</Volume>
                  </tr>
                ))}
              </tbody>
            </TradeTable>
          </Trades>
        </Book>
      </Market>

      <Comment onSubmit={e => e.preventDefault()}>
        <RoundButton type="button" aria-label="弹幕设置">
          <NoteIcon />
        </RoundButton>
        <Field>
          <input placeholder="弹幕走一波…" aria-label="弹幕" />
          <DanmuToggle type="button">
            弹
            <CheckDot />
          </DanmuToggle>
        </Field>
      </Comment>

      <Margin>
        <Megaphone />
        <span>看好后市但是资金不够？测一测我能融资多少钱！</span>
        <IconButton aria-label="关闭">
          <Close color={colors.brand} size={19} />
        </IconButton>
      </Margin>

      <Divider />
      <Tabs>
        {sections.map(name => (
          <Tab key={name} active={name === section ? 1 : undefined} onClick={() => setSection(name)}>
            {name}
          </Tab>
        ))}
      </Tabs>

      <Cards>
        <Card href="#rank">
          <svg width="28" height="28" viewBox="0 0 28 28">
            <circle cx="14" cy="14" r="14" fill="#dc5a54" />
            <path d="M5 21v-9h5V7h8v7h5v7z" fill="#fff" />
          </svg>
          <span>人气榜</span>
          <svg width="8" height="16" viewBox="0 0 8 16" fill="none" stroke="#bbb" strokeWidth="2">
            <path d="m1 1 6 7-6 7" />
          </svg>
        </Card>
        <Card href="#battle">
          <svg width="28" height="28" viewBox="0 0 28 28">
            <circle cx="14" cy="14" r="14" fill="#dc5a54" />
            <text x="14" y="20" fontSize="16" fontWeight="900" fontStyle="italic" fill="#fff" textAnchor="middle">VS</text>
          </svg>
          <span>多空看盘</span>
        </Card>
      </Cards>

      <BottomBar>
        <Index>
          <Triangle width={12} height={5} up color="#777" />
          <strong>3667.53</strong>
          <span>上证</span>
          -0.43%
        </Index>
        <TradeButton $buy>买</TradeButton>
        <TradeButton>卖</TradeButton>
        <Actions>
          <Action>
            <b>撤</b>
            撤单
          </Action>
          <Action>
            <Hexagon />
            设自选
          </Action>
          <Action>
            <svg width="28" height="6" viewBox="0 0 28 6" fill="#2b2b2b">
              <circle cx="3" cy="3" r="2.600" />
              <circle cx="14" cy="3" r="2.600" />
              <circle cx="25" cy="3" r="2.600" />
            </svg>
            更多
          </Action>
        </Actions>
      </BottomBar>
    </Page>
  );
};

export default App;
